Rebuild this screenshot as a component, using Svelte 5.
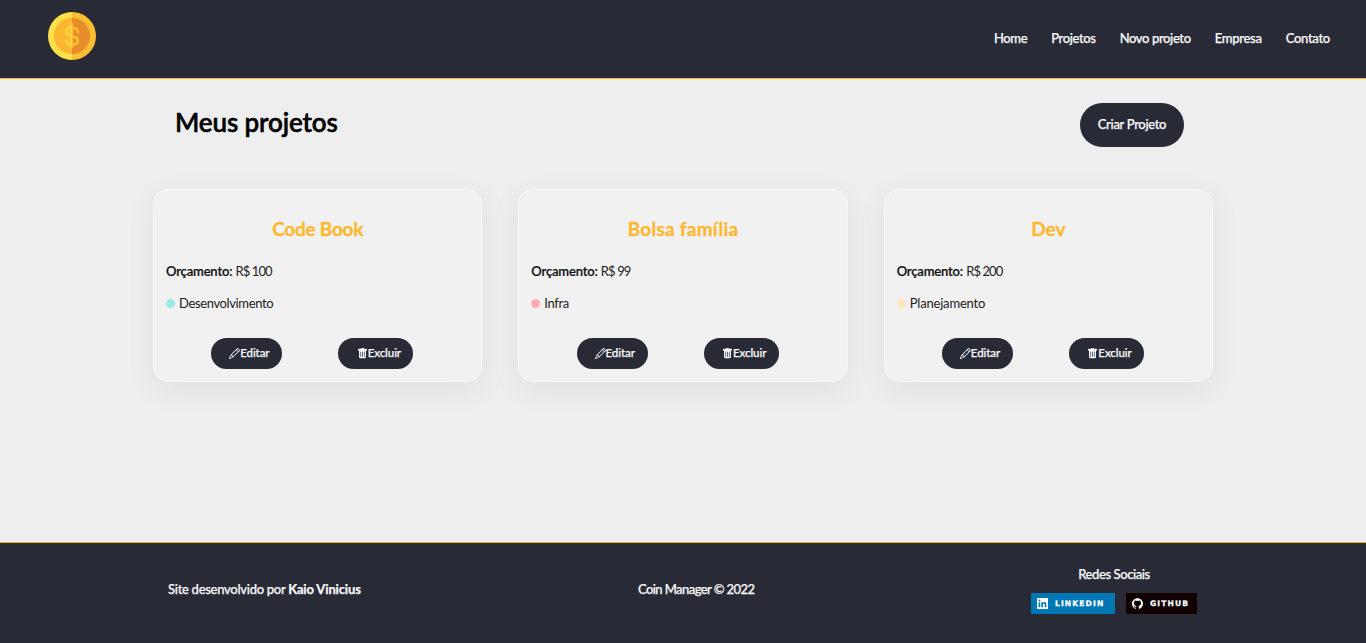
<script>
  const links = [
    { label: 'Home', cls: 'home' },
    { label: 'Projetos', cls: 'projetos' },
    { label: 'Novo projeto', cls: 'novo' },
    { label: 'Empresa', cls: 'empresa' },
    { label: 'Contato', cls: 'contato' }
  ];
  const projects = [
    { name: 'Code Book', budget: 100, category: 'Desenvolvimento', color: '#9fe8e4' },
    { name: 'Bolsa família', budget: 99, category: 'Infra', color: '#ffabb6' },
    { name: 'Dev', budget: 200, category: 'Planejamento', color: '#ffe5c2' }
  ];
</script>

<div class="page">
  <header>
    <svg class="coin" viewBox="0 0 48 48" aria-hidden="true">
      <path fill="#ffdf4a" d="M24 0a24 24 0 0 0 0 48z" />
      <path fill="#ffbd32" d="M24 0a24 24 0 0 1 0 48z" />
      <path fill="#fdb62f" d="M24 6a18 18 0 0 0 0 36z" />
      <path fill="#e78b2b" d="M24 6a18 18 0 0 1 0 36z" />
      <g fill="none" stroke-width="2.8" stroke-linecap="round" stroke-linejoin="round">
        <path stroke="#ffbd32" d="M24 12.500v22.500M30 20.300c0-2.700-2.700-4.700-6-4.700s-6 1.700-6 4.200c0 5.500 12 3 12 8.700 0 2.600-2.700 4.200-6 4.200s-6-2-6-4.700" />
        <path stroke="#ffd343" d="M24 15.600c-3.300 0-6 1.700-6 4.200 0 2.700 3 3.500 6 4.300M18 28c0 2.700 2.700 4.700 6 4.700" stroke-linecap="butt" />
      </g>
      <path fill="#ffd343" d="M24 11.100c-.8 0-1.400.6-1.400 1.400V35c0 .8.6 1.400 1.400 1.400z" />
    </svg>
    <nav>
      {#each links as l}
        <a class={l.cls} href="#top">{l.label}</a>
      {/each}
    </nav>
  </header>

  <main>
    <div class="title-bar">
      <h1>Meus projetos</h1>
      <a class="create" href="#top">Criar Projeto</a>
    </div>
    <div class="cards">
      {#each projects as p}
        <article>
          <h2>{p.name}</h2>
          <p class="budget"><b>Orçamento:</b> <span>R$ {p.budget}</span></p>
          <p class="category"><i style="background: {p.color}"></i><span>{p.category}</span></p>
          <div class="actions">
            <a class="edit" href="#top">
              <svg viewBox="0 0 16 16"><path d="M12.146.146a.5.5 0 0 1 .708 0l3 3a.5.5 0 0 1 0 .708l-10 10a.5.5 0 0 1-.168.110l-5 2a.5.5 0 0 1-.650-.650l2-5a.5.5 0 0 1 .110-.168zM11.207 2.500 13.500 4.793 14.793 3.500 12.500 1.207zm1.586 3L10.500 3.207 4 9.707V10h.5a.5.5 0 0 1 .5.5v.5h.5a.5.5 0 0 1 .5.5v.5h.293zm-9.761 5.175-.106.106-1.528 3.821 3.821-1.528.106-.106A.5.5 0 0 1 5 12.500V12h-.5a.5.5 0 0 1-.5-.5V11h-.5a.5.5 0 0 1-.468-.325" /></svg><span>Editar</span>
            </a>
            <button class="remove">
              <svg viewBox="0 0 16 16"><path d="M2.500 1a1 1 0 0 0-1 1v1a1 1 0 0 0 1 1H3v9a2 2 0 0 0 2 2h6a2 2 0 0 0 2-2V4h.5a1 1 0 0 0 1-1V2a1 1 0 0 0-1-1H10a1 1 0 0 0-1-1H7a1 1 0 0 0-1 1zm3 4a.5.5 0 0 1 .5.5v7a.5.5 0 0 1-1 0v-7a.5.5 0 0 1 .5-.5M8 5a.5.5 0 0 1 .5.5v7a.5.5 0 0 1-1 0v-7A.5.5 0 0 1 8 5m3 .5v7a.5.5 0 0 1-1 0v-7a.5.5 0 0 1 1 0" /></svg><span>Excluir</span>
            </button>
          </div>
        </article>
      {/each}
    </div>
  </main>

  <footer>
    <p class="author"><span>Site desenvolvido por</span> <b>Kaio Vinicius</b></p>
    <p class="copy">Coin Manager © 2022</p>
    <div class="social">
      <p>Redes Sociais</p>
      <div class="badges">
        <a class="badge linkedin" href="#top">
          <svg viewBox="0 0 24 24"><path d="M20.447 20.452h-3.554v-5.569c0-1.328-.027-3.037-1.852-3.037-1.853 0-2.136 1.445-2.136 2.939v5.667H9.351V9h3.414v1.561h.046c.477-.9 1.637-1.850 3.370-1.850 3.601 0 4.267 2.370 4.267 5.455v6.286zM5.337 7.433a2.062 2.062 0 0 1-2.063-2.065 2.064 2.064 0 1 1 2.063 2.065zm1.782 13.019H3.555V9h3.564v11.452zM22.225 0H1.771C.792 0 0 .774 0 1.729v20.542C0 23.227.792 24 1.771 24h20.451C23.200 24 24 23.227 24 22.271V1.729C24 .774 23.200 0 22.222 0h.003z" /></svg><span>LINKEDIN</span>
        </a>
        <a class="badge github" href="#top">
          <svg viewBox="0 0 24 24"><path d="M12 .297c-6.630 0-12 5.373-12 12 0 5.303 3.438 9.800 8.205 11.385.6.113.820-.258.820-.577 0-.285-.010-1.040-.015-2.040-3.338.724-4.042-1.610-4.042-1.610C4.422 18.070 3.633 17.700 3.633 17.700c-1.087-.744.084-.729.084-.729 1.205.084 1.838 1.236 1.838 1.236 1.070 1.835 2.809 1.305 3.495.998.108-.776.417-1.305.760-1.605-2.665-.300-5.466-1.332-5.466-5.930 0-1.310.465-2.380 1.235-3.220-.135-.303-.540-1.523.105-3.176 0 0 1.005-.322 3.300 1.230.960-.267 1.980-.399 3-.405 1.020.006 2.040.138 3 .405 2.280-1.552 3.285-1.230 3.285-1.230.645 1.653.240 2.873.120 3.176.765.840 1.230 1.910 1.230 3.220 0 4.610-2.805 5.625-5.475 5.920.420.360.810 1.096.810 2.220 0 1.606-.015 2.896-.015 3.286 0 .315.210.690.825.570C20.565 22.092 24 17.592 24 12.297c0-6.627-5.373-12-12-12" /></svg><span>GITHUB</span>
        </a>
      </div>
    </div>
  </footer>
</div>

<style>
  :global(body) { margin: 0; background: #eee; }
  .page {
    box-sizing: border-box;
    height: 643px;
    display: flex;
    flex-direction: column;
    font-family: Lato, "Open Sans", sans-serif;
    font-size: 13px;
    line-height: 20px;
    color: #111;
  }
  h1, h2, p { margin: 0; }
  a { color: inherit; text-decoration: none; }
  a, p, span, h1, h2, b { white-space: nowrap; }
  svg { display: block; flex: none; }
  header {
    box-sizing: border-box;
    height: 79px;
    flex: none;
    display: flex;
    justify-content: space-between;
    align-items: flex-start;
    padding: 12px 36px 0 48px;
    background: #282a36;
    border-bottom: 1px solid #ffb623;
    color: #f8f8f8;
  }
  .coin { width: 48px; height: 48px; }
  nav { display: flex; gap: 24px; padding-top: 16px; font-weight: 500; letter-spacing: -0.37px; }
  .empresa, .contato { letter-spacing: -0.28px; }
  nav, .create, footer, .edit, .remove { -webkit-text-stroke: 0.25px currentColor; }
  main { flex: 1; width: 1060px; margin: 0 auto; }
  .title-bar {
    display: flex;
    justify-content: space-between;
    align-items: flex-start;
    padding: 24px 29px 42px 22px;
  }
  h1 {
    font-size: 26px;
    line-height: 38px;
    font-weight: 600;
    letter-spacing: -0.15px;
    color: #000;
    -webkit-text-stroke: 0.5px currentColor;
  }
  .create {
    width: 104px;
    height: 44px;
    line-height: 43px;
    border-radius: 22px;
    background: #282a36;
    color: #f8f8f8;
    text-align: center;
    font-weight: 500;
    letter-spacing: -0.32px;
  }
  .cards { display: grid; grid-template-columns: repeat(3, 1fr); gap: 36px; }
  article {
    box-sizing: border-box;
    height: 193px;
    padding: 23px 12px 12px;
    border: 1px solid #f8f8f8;
    border-radius: 15px;
    background: #f1f1f1;
    box-shadow: 0 8px 32px rgba(0, 0, 0, 0.06);
  }
  h2 {
    font-size: 19px;
    line-height: 32px;
    font-weight: 700;
    color: #ffb830;
    text-align: center;
    -webkit-text-stroke: 0.3px currentColor;
  }
  article:nth-child(1) h2 { letter-spacing: -0.25px; }
  article:nth-child(2) h2 { letter-spacing: 0.25px; }
  .budget { margin-top: 16px; letter-spacing: -0.17px; }
  .budget b { font-weight: 600; -webkit-text-stroke: 0.2px currentColor; }
  .budget span { letter-spacing: -0.9px; color: #222; }
  .category { display: flex; align-items: center; gap: 4px; margin-top: 12px; color: #222; letter-spacing: -0.37px; }
  article:nth-child(3) .category { letter-spacing: -0.18px; }
  .category i { width: 9px; height: 9px; border-radius: 50%; }
  .actions { display: flex; gap: 56px; padding: 25px 0 0 45.2px; }
  .edit, .remove {
    box-sizing: border-box;
    height: 31px;
    display: flex;
    align-items: center;
    padding: 0 0 1px 18px;
    border: 0;
    border-radius: 16px;
    background: #282a36;
    color: #f8f8f8;
    font: inherit;
    font-size: 11.5px;
    font-weight: 500;
    letter-spacing: -0.08px;
  }
  .edit { width: 71px; }
  .remove { width: 75px; padding-left: 18.5px; }
  .edit svg, .remove svg { width: 11px; height: 11px; fill: #fff; }
  footer {
    box-sizing: border-box;
    height: 101px;
    flex: none;
    display: grid;
    grid-template-columns: 470px 393px 166px;
    padding: 21px 0 0 168px;
    background: #282a36;
    border-top: 1px solid #e9a92b;
    color: #f8f8f8;
    font-weight: 500;
  }
  .author, .copy { padding-top: 15px; }
  .author { letter-spacing: -0.28px; }
  .author b { font-weight: 700; letter-spacing: -0.15px; }
  .copy { letter-spacing: -0.58px; }
  .social > p { text-align: center; letter-spacing: -0.4px; }
  .badges { display: flex; gap: 11px; margin-top: 9px; }
  .badge {
    height: 21px;
    display: flex;
    align-items: center;
    gap: 7px;
    padding-left: 6px;
    box-sizing: border-box;
    font: 700 7.6px/21px "DejaVu Sans", sans-serif;
    letter-spacing: 1.1px;
    color: #fff;
  }
  .badge svg { width: 11px; height: 11px; fill: #fff; }
  .linkedin { width: 84px; background: #0077b5; }
  .github { width: 71px; background: #100000; }
</style>
